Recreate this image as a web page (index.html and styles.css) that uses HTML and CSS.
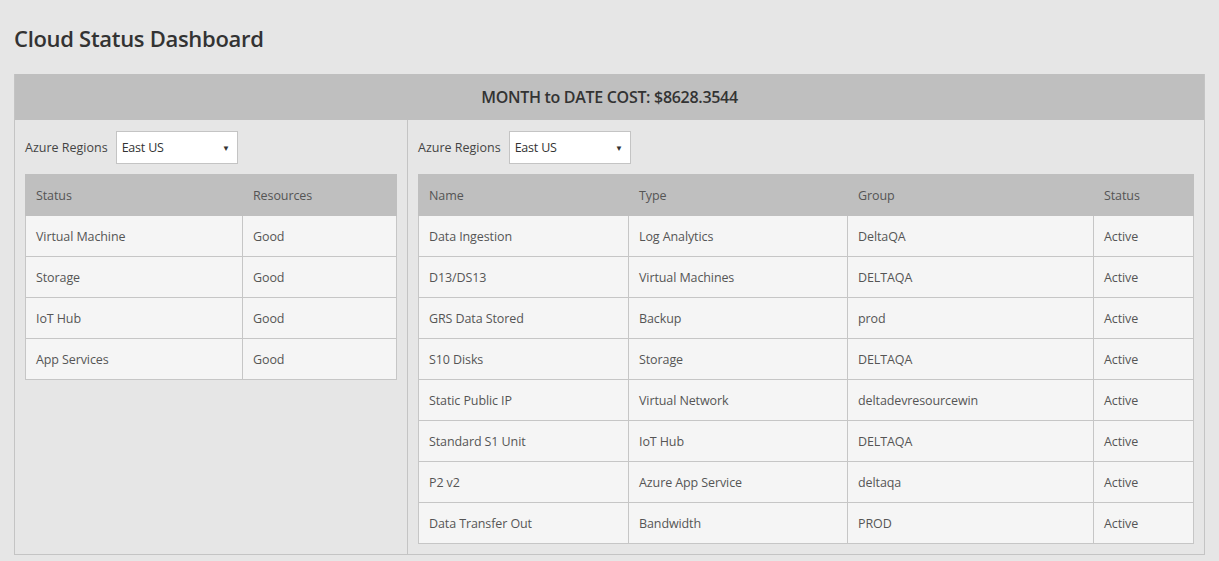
FILE: index.html
```html
<!DOCTYPE html>
<html>
<head>
<meta charset="utf-8">
<link rel="stylesheet" href="styles.css">
</head>
<body>
<h1 class="title">Cloud Status Dashboard</h1>
<div class="panel">
  <div class="panel-head">MONTH to DATE COST: $8628.3544</div>
  <div class="panel-body">
    <div class="col col-left">
      <div class="controls">
        <span class="label">Azure Regions</span>
        <div class="select"><span>East US</span><span class="arrow">&#9660;</span></div>
      </div>
      <table class="grid">
        <colgroup><col class="c-l1"><col></colgroup>
        <thead><tr><th>Status</th><th>Resources</th></tr></thead>
        <tbody>
          <tr><td>Virtual Machine</td><td>Good</td></tr>
          <tr><td>Storage</td><td>Good</td></tr>
          <tr><td>IoT Hub</td><td>Good</td></tr>
          <tr><td>App Services</td><td>Good</td></tr>
        </tbody>
      </table>
    </div>
    <div class="col col-right">
      <div class="controls">
        <span class="label">Azure Regions</span>
        <div class="select"><span>East US</span><span class="arrow">&#9660;</span></div>
      </div>
      <table class="grid">
        <colgroup><col class="c-r1"><col class="c-r2"><col class="c-r3"><col></colgroup>
        <thead><tr><th>Name</th><th>Type</th><th>Group</th><th>Status</th></tr></thead>
        <tbody>
          <tr><td>Data Ingestion</td><td>Log Analytics</td><td>DeltaQA</td><td>Active</td></tr>
          <tr><td>D13/DS13</td><td>Virtual Machines</td><td>DELTAQA</td><td>Active</td></tr>
          <tr><td>GRS Data Stored</td><td>Backup</td><td>prod</td><td>Active</td></tr>
          <tr><td>S10 Disks</td><td>Storage</td><td>DELTAQA</td><td>Active</td></tr>
          <tr><td>Static Public IP</td><td>Virtual Network</td><td>deltadevresourcewin</td><td>Active</td></tr>
          <tr><td>Standard S1 Unit</td><td>IoT Hub</td><td>DELTAQA</td><td>Active</td></tr>
          <tr><td>P2 v2</td><td>Azure App Service</td><td>deltaqa</td><td>Active</td></tr>
          <tr><td>Data Transfer Out</td><td>Bandwidth</td><td>PROD</td><td>Active</td></tr>
        </tbody>
      </table>
    </div>
  </div>
</div>
</body>
</html>
```
FILE: styles.css
```css
html, body {
  margin: 0;
  padding: 0;
  background: #e6e6e6;
}
body {
  font-family: "Open Sans", "Noto Sans", sans-serif;
  color: #555;
  padding: 0 14px 0 14px;
}
.title {
  margin: 0;
  padding-top: 24px;
  height: 74px;
  box-sizing: border-box;
  font-size: 22px;
  font-weight: 600;
  color: #333;
  line-height: 28px;
  letter-spacing: -0.3px;
}
.panel {
  width: 1191px;
  box-sizing: border-box;
  border: 1px solid #c4c4c4;
  border-top: none;
}
.panel-head {
  background: #bfbfbf;
  height: 46px;
  line-height: 47px;
  text-align: center;
  font-size: 16px;
  font-weight: 600;
  color: #333;
  letter-spacing: -0.3px;
}
.panel-body {
  display: flex;
}
.col {
  box-sizing: border-box;
  padding: 11px 10px 10px 10px;
}
.col-left {
  width: 393px;
  border-right: 1px solid #c4c4c4;
}
.col-right {
  flex: 1;
}
.controls {
  display: flex;
  align-items: center;
  gap: 8px;
  height: 33px;
  margin-bottom: 10px;
}
.label {
  font-size: 12.5px;
  color: #444;
  letter-spacing: 0;
}
.select {
  width: 122px;
  height: 33px;
  box-sizing: border-box;
  background: #fff;
  border: 1px solid #c4c4c4;
  display: flex;
  align-items: center;
  justify-content: space-between;
  padding: 0 7px 0 5px;
  font-size: 12.5px;
  color: #333;
  letter-spacing: -0.2px;
}
.arrow {
  font-size: 8px;
  color: #333;
}
.grid {
  width: 100%;
  border-collapse: collapse;
  table-layout: fixed;
  font-size: 12.5px;
  letter-spacing: -0.1px;
}
.c-l1 { width: 217px; }
.c-r1 { width: 210px; }
.c-r2 { width: 219px; }
.c-r3 { width: 246px; }
.grid th {
  background: #bfbfbf;
  height: 40px;
  padding: 0 10px;
  text-align: left;
  font-weight: 400;
  color: #555;
  border: 1px solid #bfbfbf;
}
.grid td {
  background: #f5f5f5;
  height: 40px;
  padding: 0 10px;
  border: 1px solid #c6c6c6;
  color: #555;
}
```
